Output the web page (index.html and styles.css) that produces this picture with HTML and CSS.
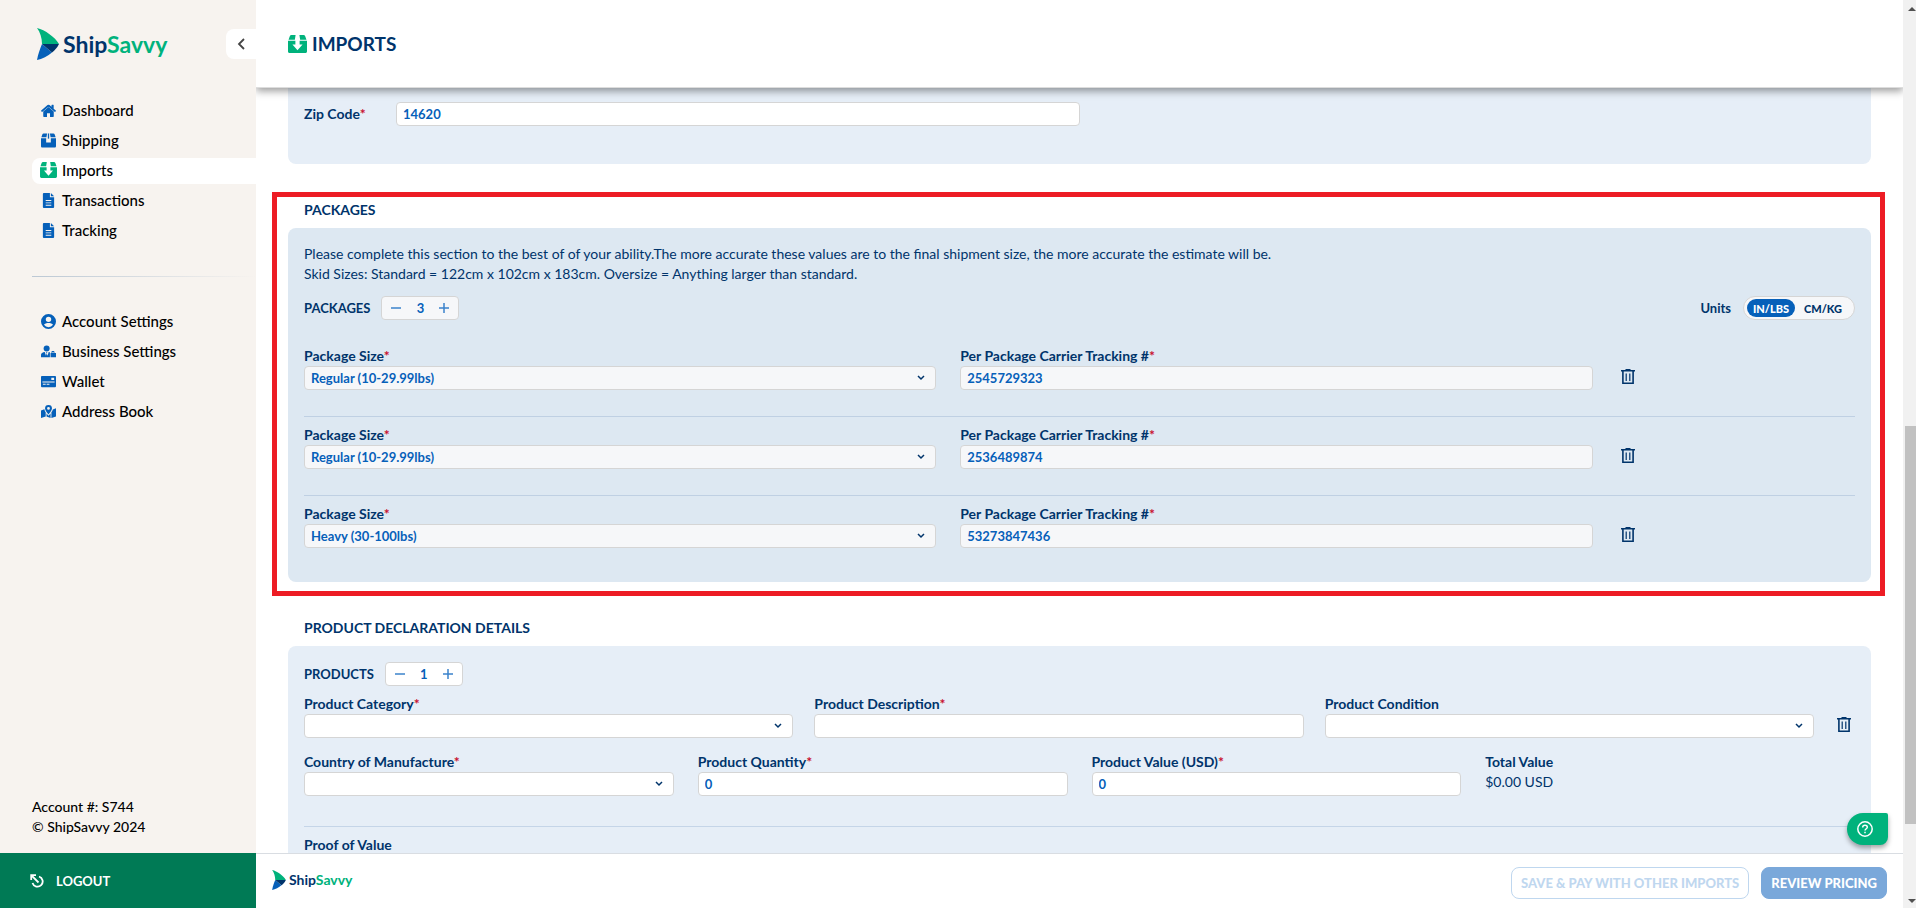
FILE: index.html
```html
<!DOCTYPE html>
<html lang="en">
<head>
    <meta charset="UTF-8">
    <meta name="viewport" content="width=device-width, initial-scale=1.0">
    <title>ShipSavvy - Imports</title>
    <link rel="stylesheet" href="styles.css">
</head>
<body>
    <!-- icon sprite -->
    <svg class="sprite" aria-hidden="true">
        <symbol id="mark" viewBox="0 0 22 32">
            <path fill="#00b27c" d="M0 0C8 2 18 9 22 16H5C5 10 3 4 0 0z"/>
            <path fill="#0660b9" d="M0 32c1-6 3-11 5-16l10 8.500C11 28 5 31 0 32z"/>
            <path fill="#00346b" d="M5 16h17c-2 4-4 6-7 8.500z"/>
        </symbol>
        <symbol id="home" viewBox="0 0 16 14">
            <path d="M8 3.200 2.400 8v5.200c0 .4.300.7.700.7h3.300V9.800h3.200v4.100h3.300c.4 0 .7-.3.700-.7V8z"/>
            <path d="M15.800 7 13.500 5V1.300c0-.3-.2-.5-.5-.5h-1.300c-.3 0-.5.2-.5.500V3L9 1.200a1.600 1.600 0 0 0-2 0L.2 7c-.2.200-.2.500 0 .7l.6.700c.2.200.5.200.7 0L8 2.900l6.500 5.500c.2.200.5.200.7 0l.6-.7c.2-.2.200-.5 0-.7z"/>
        </symbol>
        <symbol id="box" viewBox="0 0 16 15">
            <path d="M2.800 0h3.700L5.800 4H.4l1-3C1.600.4 2.100 0 2.800 0zM9.500 0h3.700c.7 0 1.200.4 1.400 1l1 3h-5.400z"/>
            <path d="M0 5h5.500v4.500h5V5H16v8.500c0 .8-.6 1.500-1.400 1.500H1.400C.6 15 0 14.300 0 13.500z"/>
            <path d="M7.300 0h1.400v5.500H7.300z"/>
        </symbol>
        <symbol id="import" viewBox="0 0 18 17">
            <path d="M3.200 0h4L6.500 4.500H.5l1.200-3.400C2 .4 2.500 0 3.200 0zM10.800 0h4c.7 0 1.200.4 1.500 1.100l1.200 3.400h-6z"/>
            <path d="M0 5.500h7V9H4.200L9 14.500 13.800 9H11V5.500h7V15.500c0 .8-.6 1.500-1.500 1.500h-15C.6 17 0 16.300 0 15.500z"/>
        </symbol>
        <symbol id="file" viewBox="0 0 12 16">
            <path fill-rule="evenodd" d="M1 0h6.500v4.500H12V15c0 .6-.4 1-1 1H1c-.6 0-1-.4-1-1V1c0-.6.4-1 1-1zm2 7.500v1h6v-1zm0 2.500v1h6v-1zm0 2.500v1h6v-1z"/>
            <path d="M8.500 0 12 3.500H8.500z"/>
        </symbol>
        <symbol id="account" viewBox="0 0 16 16">
            <path fill-rule="evenodd" d="M8 0a8 8 0 1 0 0 16A8 8 0 0 0 8 0zm0 2.800a2.900 2.900 0 1 1 0 5.800 2.900 2.900 0 0 1 0-5.800zM8 14a6 6 0 0 1-4.800-2.500c.6-1.300 2.800-2 4.800-2s4.200.7 4.800 2A6 6 0 0 1 8 14z"/>
        </symbol>
        <symbol id="business" viewBox="0 0 16 13">
            <circle cx="6" cy="3.200" r="3.200"/>
            <path d="M0 12.500V10c0-1.500 1.800-2.800 4-3l1.300 4L6 8.500 5.500 7h1.200l-.5 1.500.8 2.500 1.200-4 1.300.4V12.500z"/>
            <path fill-rule="evenodd" d="M10.200 8h1V6.800c0-.4.3-.8.800-.8h1.500c.5 0 .8.400.8.800V8H16v4.500h-5.800zm2-1v1h1.200V7z"/>
        </symbol>
        <symbol id="wallet" viewBox="0 0 16 12">
            <path fill-rule="evenodd" d="M1 0h14c.6 0 1 .4 1 1v10c0 .6-.4 1-1 1H1c-.6 0-1-.4-1-1V1c0-.6.4-1 1-1zm10 2v2.500h3V2zM1.500 6v1h13V6zM2 8.500v1h3v-1zm4 0v1h3v-1z"/>
        </symbol>
        <symbol id="map" viewBox="0 0 16 14">
            <path fill-rule="evenodd" d="M8 0a3.700 3.700 0 0 0-3.700 3.700C4.300 6 8 10 8 10s3.700-4 3.700-6.300A3.700 3.700 0 0 0 8 0zm0 2.200a1.500 1.500 0 1 1 0 3 1.500 1.500 0 0 1 0-3z"/>
            <path d="M0 5.800 3.600 4.500c.2 1.200.7 2.300 1.400 3.400v4.300L0 14zM5.900 9.200 8 11.600l2.200-2.400V14l-4.300-1.800zM11.100 7.900c.8-1.100 1.300-2 1.500-3.100L16 3.500v8.700L11.100 14z"/>
        </symbol>
        <symbol id="logout" viewBox="0 0 14 14">
            <path fill="none" stroke="currentColor" stroke-width="1.800" d="M1.200 6V1.200H6M1.200 1.200l7.300 7.300M9 2.500A5.200 5.200 0 1 1 2.500 9"/>
        </symbol>
        <symbol id="chevron" viewBox="0 0 8 6">
            <path fill="none" stroke="currentColor" stroke-width="1.500" d="M1 1l3 3 3-3"/>
        </symbol>
        <symbol id="trash" viewBox="0 0 14 16">
            <path fill="none" stroke="currentColor" stroke-width="1.600" d="M0 1.800h14M1.900 2v12.200h10.200V2"/>
            <path fill="none" stroke="currentColor" stroke-width="1.200" d="M5.200 4.500v7.500M8.800 4.500v7.500"/>
            <path d="M4.500 0h5v2h-5z"/>
        </symbol>
        <symbol id="help" viewBox="0 0 16 16">
            <circle cx="8" cy="8" r="7.200" fill="none" stroke="currentColor" stroke-width="1.500"/>
            <path fill="none" stroke="currentColor" stroke-width="1.500" d="M5.700 6.400C5.700 5 6.700 4.200 8 4.200s2.300.8 2.300 2c0 1.500-2.300 1.600-2.300 3.400M8 10.800v1.500"/>
        </symbol>
        <symbol id="minus" viewBox="0 0 12 12">
            <path fill="none" stroke="currentColor" stroke-width="1.500" d="M1 6h10"/>
        </symbol>
        <symbol id="plus" viewBox="0 0 12 12">
            <path fill="none" stroke="currentColor" stroke-width="1.500" d="M1 6h10M6 1v10"/>
        </symbol>
    </svg>

    <aside class="sidebar">
        <div class="sidebar-top">
            <a class="logo" href="#"><svg class="mark"><use href="#mark"/></svg><span>Ship<em>Savvy</em></span></a>
            <button class="collapse" aria-label="Collapse menu">
                <svg viewBox="0 0 8 12"><path fill="none" stroke="#444" stroke-width="1.800" d="M7 1 2 6l5 5"/></svg>
            </button>
        </div>
        <nav class="menu">
            <a href="#"><svg><use href="#home"/></svg>Dashboard</a>
            <a href="#"><svg><use href="#box"/></svg>Shipping</a>
            <a href="#" class="active"><svg><use href="#import"/></svg>Imports</a>
            <a href="#"><svg><use href="#file"/></svg>Transactions</a>
            <a href="#"><svg><use href="#file"/></svg>Tracking</a>
        </nav>
        <div class="menu-line"></div>
        <nav class="menu">
            <a href="#"><svg><use href="#account"/></svg>Account Settings</a>
            <a href="#"><svg><use href="#business"/></svg>Business Settings</a>
            <a href="#"><svg><use href="#wallet"/></svg>Wallet</a>
            <a href="#"><svg><use href="#map"/></svg>Address Book</a>
        </nav>
        <div class="account">
            <p>Account #: S744</p>
            <p>© ShipSavvy 2024</p>
        </div>
        <button class="logout"><svg><use href="#logout"/></svg>LOGOUT</button>
    </aside>

    <div class="page">
        <header class="header">
            <svg><use href="#import"/></svg>
            <h1>IMPORTS</h1>
        </header>

        <main class="content">
            <section class="panel address">
                <label for="zip">Zip Code<i>*</i></label>
                <input id="zip" type="text" value="14620">
            </section>

            <section class="packages">
                <h2>PACKAGES</h2>
                <div class="panel">
                    <p class="hint">Please complete this section to the best of of your ability.The more accurate these values are to the final shipment size, the more accurate the estimate will be.</p>
                    <p class="hint">Skid Sizes: Standard = 122cm x 102cm x 183cm. Oversize = Anything larger than standard.</p>
                    <div class="count-row">
                        <label for="package-count">PACKAGES</label>
                        <div class="stepper">
                            <button aria-label="Remove package"><svg><use href="#minus"/></svg></button>
                            <input id="package-count" type="text" value="3">
                            <button aria-label="Add package"><svg><use href="#plus"/></svg></button>
                        </div>
                        <span class="units-label">Units</span>
                        <div class="units">
                            <button class="on">IN/LBS</button>
                            <button>CM/KG</button>
                        </div>
                    </div>

                    <div class="package">
                        <div class="field">
                            <label for="size1">Package Size<i>*</i></label>
                            <div class="select"><select id="size1"><option>Regular (10-29.99lbs)</option></select><svg><use href="#chevron"/></svg></div>
                        </div>
                        <div class="field">
                            <label for="track1">Per Package Carrier Tracking #<i>*</i></label>
                            <input id="track1" type="text" value="2545729323">
                        </div>
                        <button class="trash" aria-label="Delete package"><svg><use href="#trash"/></svg></button>
                    </div>
                    <div class="package">
                        <div class="field">
                            <label for="size2">Package Size<i>*</i></label>
                            <div class="select"><select id="size2"><option>Regular (10-29.99lbs)</option></select><svg><use href="#chevron"/></svg></div>
                        </div>
                        <div class="field">
                            <label for="track2">Per Package Carrier Tracking #<i>*</i></label>
                            <input id="track2" type="text" value="2536489874">
                        </div>
                        <button class="trash" aria-label="Delete package"><svg><use href="#trash"/></svg></button>
                    </div>
                    <div class="package">
                        <div class="field">
                            <label for="size3">Package Size<i>*</i></label>
                            <div class="select"><select id="size3"><option>Heavy (30-100lbs)</option></select><svg><use href="#chevron"/></svg></div>
                        </div>
                        <div class="field">
                            <label for="track3">Per Package Carrier Tracking #<i>*</i></label>
                            <input id="track3" type="text" value="53273847436">
                        </div>
                        <button class="trash" aria-label="Delete package"><svg><use href="#trash"/></svg></button>
                    </div>
                </div>
            </section>

            <section class="products">
                <h2>PRODUCT DECLARATION DETAILS</h2>
                <div class="panel">
                    <div class="count-row">
                        <label for="product-count">PRODUCTS</label>
                        <div class="stepper">
                            <button aria-label="Remove product"><svg><use href="#minus"/></svg></button>
                            <input id="product-count" type="text" value="1">
                            <button aria-label="Add product"><svg><use href="#plus"/></svg></button>
                        </div>
                    </div>
                    <div class="row-three">
                        <div class="field">
                            <label for="category">Product Category<i>*</i></label>
                            <div class="select"><select id="category"><option></option></select><svg><use href="#chevron"/></svg></div>
                        </div>
                        <div class="field">
                            <label for="description">Product Description<i>*</i></label>
                            <input id="description" type="text">
                        </div>
                        <div class="field">
                            <label for="condition">Product Condition</label>
                            <div class="select"><select id="condition"><option></option></select><svg><use href="#chevron"/></svg></div>
                        </div>
                        <button class="trash" aria-label="Delete product"><svg><use href="#trash"/></svg></button>
                    </div>
                    <div class="row-four">
                        <div class="field">
                            <label for="country">Country of Manufacture<i>*</i></label>
                            <div class="select"><select id="country"><option></option></select><svg><use href="#chevron"/></svg></div>
                        </div>
                        <div class="field">
                            <label for="quantity">Product Quantity<i>*</i></label>
                            <input id="quantity" type="text" value="0">
                        </div>
                        <div class="field">
                            <label for="value">Product Value (USD)<i>*</i></label>
                            <input id="value" type="text" value="0">
                        </div>
                        <div class="field">
                            <strong>Total Value</strong>
                            <p>$0.00 USD</p>
                        </div>
                    </div>
                    <strong>Proof of Value</strong>
                </div>
            </section>

            <button class="help" aria-label="Help"><svg><use href="#help"/></svg></button>
        </main>

        <footer class="footer">
            <a class="logo small" href="#"><svg class="mark"><use href="#mark"/></svg><span>Ship<em>Savvy</em></span></a>
            <button class="btn btn-outline" disabled>SAVE &amp; PAY WITH OTHER IMPORTS</button>
            <button class="btn btn-main">REVIEW PRICING</button>
        </footer>
    </div>

    <div class="scrollbar" aria-hidden="true">
        <svg viewBox="0 0 8 4"><path d="M0 4l4-4 4 4z"/></svg>
        <div class="thumb"></div>
        <svg viewBox="0 0 8 4"><path d="M0 0l4 4 4-4z"/></svg>
    </div>
</body>
</html>
```

FILE: styles.css
```css
* {
    margin: 0;
    padding: 0;
    box-sizing: border-box;
    font-family: Lato, sans-serif;
}

body {
    display: flex;
    height: 100vh;
    overflow: hidden;
    font-size: 14px;
    line-height: 20px;
    color: #00346b;
    background: #fff;
}

svg {
    display: block;
    fill: currentColor;
}

button {
    border: none;
    background: none;
    color: inherit;
    cursor: pointer;
}

a {
    text-decoration: none;
    color: inherit;
}

.sprite {
    position: absolute;
    width: 0;
    height: 0;
}

/* sidebar */
.sidebar {
    z-index: 2;
    flex: 0 0 256px;
    display: flex;
    flex-direction: column;
    background: #f7f3ef;
    color: #000;
}

.sidebar-top {
    display: flex;
    align-items: center;
    justify-content: space-between;
    height: 88px;
    padding-left: 37px;
    margin-bottom: 10px;
}

.logo {
    display: flex;
    align-items: center;
    gap: 4px;
    font-size: 23px;
    font-weight: 700;
    color: #00346b;
}

.logo em {
    font-style: normal;
    color: #00b27c;
}

.logo .mark {
    width: 22px;
    height: 32px;
}

.logo.small {
    gap: 3px;
    font-size: 14px;
    margin-right: auto;
    padding-bottom: 5px;
}

.logo.small .mark {
    width: 14px;
    height: 20px;
}

.collapse {
    display: flex;
    align-items: center;
    justify-content: center;
    width: 30px;
    height: 30px;
    background: #fff;
    border-radius: 8px 0 0 8px;
}

.collapse svg {
    width: 8px;
    height: 12px;
}

.menu {
    display: flex;
    flex-direction: column;
    gap: 4px;
    padding-left: 32px;
}

.menu a {
    display: flex;
    align-items: center;
    gap: 5px;
    height: 26px;
    padding: 0 0 2px 8px;
    font-size: 15px;
    font-weight: 500;
    border-radius: 8px 0 0 8px;
}

.menu svg {
    width: 15px;
    height: 15px;
    margin: 0 1px;
    color: #0660b9;
}

.menu a.active {
    background: #fff;
}

.menu .active svg {
    width: 17px;
    height: 16px;
    margin: 0;
    color: #00b27c;
}

.menu-line {
    height: 1px;
    margin: 32px 0 32px 32px;
    background: linear-gradient(to right, #bcc8d4, #f7f3ef);
}

.account {
    margin-top: auto;
    padding: 0 32px 16px;
    font-weight: 500;
}

.logout {
    display: flex;
    align-items: center;
    gap: 12px;
    height: 55px;
    padding-left: 30px;
    background: #007a55;
    color: #fff;
    font-size: 13px;
    font-weight: 700;
}

.logout svg {
    width: 14px;
    height: 14px;
}

/* page */
.page {
    position: relative;
    flex: 1;
    display: flex;
    flex-direction: column;
    min-width: 0;
}

.header {
    z-index: 1;
    flex: 0 0 88px;
    display: flex;
    align-items: center;
    gap: 5px;
    padding-left: 32px;
    background: #fff;
    border-bottom: 1px solid #ddd;
    box-shadow: 0 3px 8px rgba(0, 0, 0, 0.4);
}

.header svg {
    width: 19px;
    height: 18px;
    color: #00b27c;
}

.header h1 {
    font-size: 19px;
    font-weight: 700;
}

.content {
    flex: 1;
    min-height: 0;
    overflow: hidden;
    padding: 0 32px;
}

.panel {
    padding: 16px;
    background: #e6eef7;
    border-radius: 8px;
}

h2 {
    padding-left: 16px;
    font-size: 14px;
    font-weight: 700;
    line-height: 20px;
}

label,
strong {
    font-weight: 700;
}

label i {
    font-style: normal;
    color: #c8102e;
}

input,
select {
    width: 100%;
    height: 24px;
    padding: 0 6px;
    border: 1px solid #d5d5d5;
    border-radius: 4px;
    background: #fff;
    color: #0660b9;
    font-size: 13px;
    font-weight: 700;
    appearance: none;
}

.select {
    position: relative;
}

.select svg {
    position: absolute;
    top: 9px;
    right: 11px;
    width: 8px;
    height: 6px;
    pointer-events: none;
}

.address {
    display: grid;
    grid-template-columns: 92px 684px;
    align-items: center;
    padding: 14px 16px 38px;
    border-radius: 0 0 8px 8px;
}

.packages {
    margin: 28px -14px 0 -16px;
    padding: 3px 9px 9px 11px;
    border: 5px solid #ed1c24;
}

.packages h2,
.products h2 {
    margin-bottom: 8px;
}

.packages .panel {
    background: #dde8f2;
    padding-bottom: 34px;
}

.packages input,
.packages select,
.packages .stepper,
.packages .units {
    background: #f6f7f9;
}

.count-row {
    display: flex;
    align-items: center;
    height: 24px;
}

.count-row label {
    font-size: 13px;
}

.packages .count-row {
    margin: 12px 0 26px;
}

.stepper {
    display: flex;
    align-items: center;
    width: 78px;
    height: 24px;
    margin-left: 11px;
    border: 1px solid #d5d5d5;
    border-radius: 4px;
    background: #fff;
}

.count-row .stepper input {
    flex: 1;
    min-width: 0;
    height: 22px;
    padding: 0;
    border: none;
    background: none;
    text-align: center;
}

.stepper button {
    flex: 0 0 28px;
    display: flex;
    justify-content: center;
    color: #3b83cb;
}

.stepper svg {
    width: 12px;
    height: 12px;
}

.units-label {
    margin-left: auto;
    margin-right: 12px;
    font-size: 13px;
    font-weight: 700;
}

.units {
    display: flex;
    height: 24px;
    padding: 2px 3px;
    border: 1px solid #d5d5d5;
    border-radius: 12px;
}

.units button {
    width: 48px;
    border-radius: 9px;
    font-size: 11px;
    font-weight: 900;
}

.units button:last-child {
    width: 56px;
}

.units .on {
    background: #0660b9;
    color: #fff;
}

.package {
    display: grid;
    grid-template-columns: repeat(12, 1fr);
    gap: 24px;
    padding-bottom: 26px;
}

.package .field {
    grid-column: span 5;
}

.package + .package {
    padding-top: 8px;
    border-top: 1px solid #bfd0e3;
}

.package:last-child {
    padding-bottom: 0;
}

.trash {
    display: flex;
    align-items: flex-end;
    justify-self: start;
    padding: 0 4px 5px;
}

.trash svg {
    width: 14px;
    height: 16px;
}

.products {
    margin-top: 22px;
}

.row-three,
.row-four {
    display: grid;
}

.row-three {
    grid-template-columns: 1fr 1fr 1fr 20px;
    gap: 21px;
    margin-top: 8px;
}

.row-three .trash {
    padding: 0 2px 5px;
}

.row-four {
    grid-template-columns: repeat(4, 1fr);
    gap: 24px;
    margin: 14px 0 8px;
    padding-bottom: 30px;
    border-bottom: 1px solid #c5d5e8;
}

.help {
    position: absolute;
    right: 15px;
    bottom: 63px;
    display: flex;
    align-items: center;
    width: 41px;
    height: 32px;
    padding-left: 10px;
    background: #00b27c;
    color: #fff;
    border-radius: 16px 2px 8px 16px;
    box-shadow: 0 3px 5px rgba(0, 0, 0, 0.35);
}

.help svg {
    width: 16px;
    height: 16px;
}

.footer {
    flex: 0 0 55px;
    display: flex;
    align-items: center;
    gap: 12px;
    padding: 3px 16px 0;
    border-top: 1px solid #d9dde2;
    background: #fff;
}

.btn {
    height: 32px;
    padding: 0 9px;
    border: 1px solid #7aa8da;
    border-radius: 8px;
    font-size: 13px;
    font-weight: 900;
}

.btn-outline {
    border-color: #bfd7ef;
    color: #bfd7ef;
}

.btn-main {
    background: #7aa8da;
    color: #fff;
}

/* scrollbar track on the right edge */
.scrollbar {
    z-index: 2;
    flex: 0 0 13px;
    display: flex;
    flex-direction: column;
    align-items: flex-end;
    padding: 7px 0 5px;
    background: #f1f1f1;
    color: #505050;
}

.scrollbar svg {
    width: 8px;
    height: 4px;
}

.scrollbar .thumb {
    width: 11px;
    height: 398px;
    margin-top: auto;
    margin-bottom: 75px;
    background: #c1c1c1;
}
```
